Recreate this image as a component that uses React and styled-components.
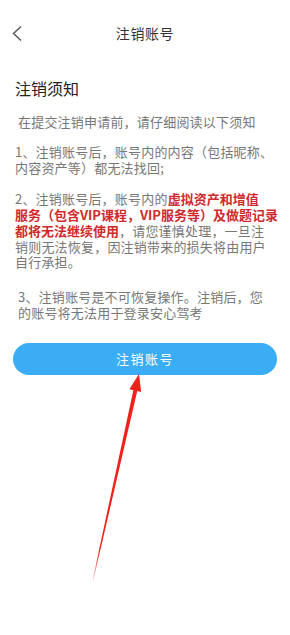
import styled, { createGlobalStyle } from "styled-components";

const GlobalStyle = createGlobalStyle`
  html, body {
    margin: 0;
    padding: 0;
    background: #fff;
  }
  body {
    font-family: "Noto Sans CJK SC", "Noto Sans", sans-serif;
  }
`;

const Page = styled.div`
  position: relative;
  width: 290px;
  height: 635px;
  overflow: hidden;
  background: #fff;
`;

const Header = styled.div`
  position: relative;
  height: 42px;
  margin-top: 12px;
  display: flex;
  align-items: center;
  justify-content: center;
`;

const BackButton = styled.div`
  position: absolute;
  left: 12px;
  top: 14px;
  width: 10px;
  height: 15px;
  display: flex;
`;

const Title = styled.h1`
  margin: 0;
  font-size: 14px;
  font-weight: 400;
  color: #333;
  letter-spacing: 0.6px;
`;

const Content = styled.div`
  padding: 0 13px 0 15px;
`;

const Heading = styled.h2`
  margin: 24px 0 0;
  font-size: 16px;
  line-height: 20px;
  font-weight: 400;
  color: #222;
`;

const Paragraph = styled.p`
  margin: ${(p) => p.$gap}px 0 0;
  padding-left: ${(p) => (p.$indent ? 3 : 0)}px;
  font-size: 13px;
  line-height: 15.75px;
  letter-spacing: 0.2px;
  white-space: nowrap;
  color: #777;
`;

const Warn = styled.span`
  color: #d02a2c;
  font-weight: 700;
  letter-spacing: 0;
`;

const SubmitButton = styled.button`
  display: block;
  width: 264px;
  height: 32px;
  margin-top: 22px;
  margin-left: -2px;
  border: none;
  border-radius: 16px;
  background: #3aadf5;
  color: #fff;
  font-family: inherit;
  font-size: 13px;
  letter-spacing: 1.5px;
`;

const Arrow = styled.svg`
  position: absolute;
  left: 0;
  top: 0;
  pointer-events: none;
`;

function App() {
  return (
    <Page>
      <GlobalStyle />
      <Header>
        <BackButton>
          <svg width="10" height="15" viewBox="0 0 10 15">
            <polyline points="9,0.5 1.5,7.5 9,14.5" fill="none" stroke="#555" strokeWidth="1.4" />
          </svg>
        </BackButton>
        <Title>注销账号</Title>
      </Header>
      <Content>
        <Heading>注销须知</Heading>
        <Paragraph $gap={16} $indent>在提交注销申请前，请仔细阅读以下须知</Paragraph>
        <Paragraph $gap={14}>
          1、注销账号后，账号内的内容（包括昵称、
          <br />
          内容资产等）都无法找回;
        </Paragraph>
        <Paragraph $gap={16}>
          2、注销账号后，账号内的<Warn>虚拟资产和增值</Warn>
          <br />
          <Warn>服务（包含VIP课程，VIP服务等）及做题记录</Warn>
          <br />
          <Warn>都将无法继续使用</Warn>，请您谨慎处理，一旦注
          <br />
          销则无法恢复，因注销带来的损失将由用户
          <br />
          自行承担。
        </Paragraph>
        <Paragraph $gap={19} $indent>
          3、注销账号是不可恢复操作。注销后，您
          <br />
          的账号将无法用于登录安心驾考
        </Paragraph>
        <SubmitButton>注销账号</SubmitButton>
      </Content>
      <Arrow width="290" height="635" viewBox="0 0 290 635">
        <defs>
          <linearGradient id="fade" x1="93" y1="580" x2="139" y2="374" gradientUnits="userSpaceOnUse">
            <stop offset="0" stopColor="#f0201a" stopOpacity="0.2" />
            <stop offset="0.15" stopColor="#f0201a" stopOpacity="1" />
            <stop offset="1" stopColor="#f0201a" stopOpacity="1" />
          </linearGradient>
        </defs>
        <polygon
          points="139,374 141.2,391.9 137.25,391.04 93.4,580.1 92.6,579.9 133.35,390.16 129.4,389.3"
          fill="url(#fade)"
        />
      </Arrow>
    </Page>
  );
}

export default App;
